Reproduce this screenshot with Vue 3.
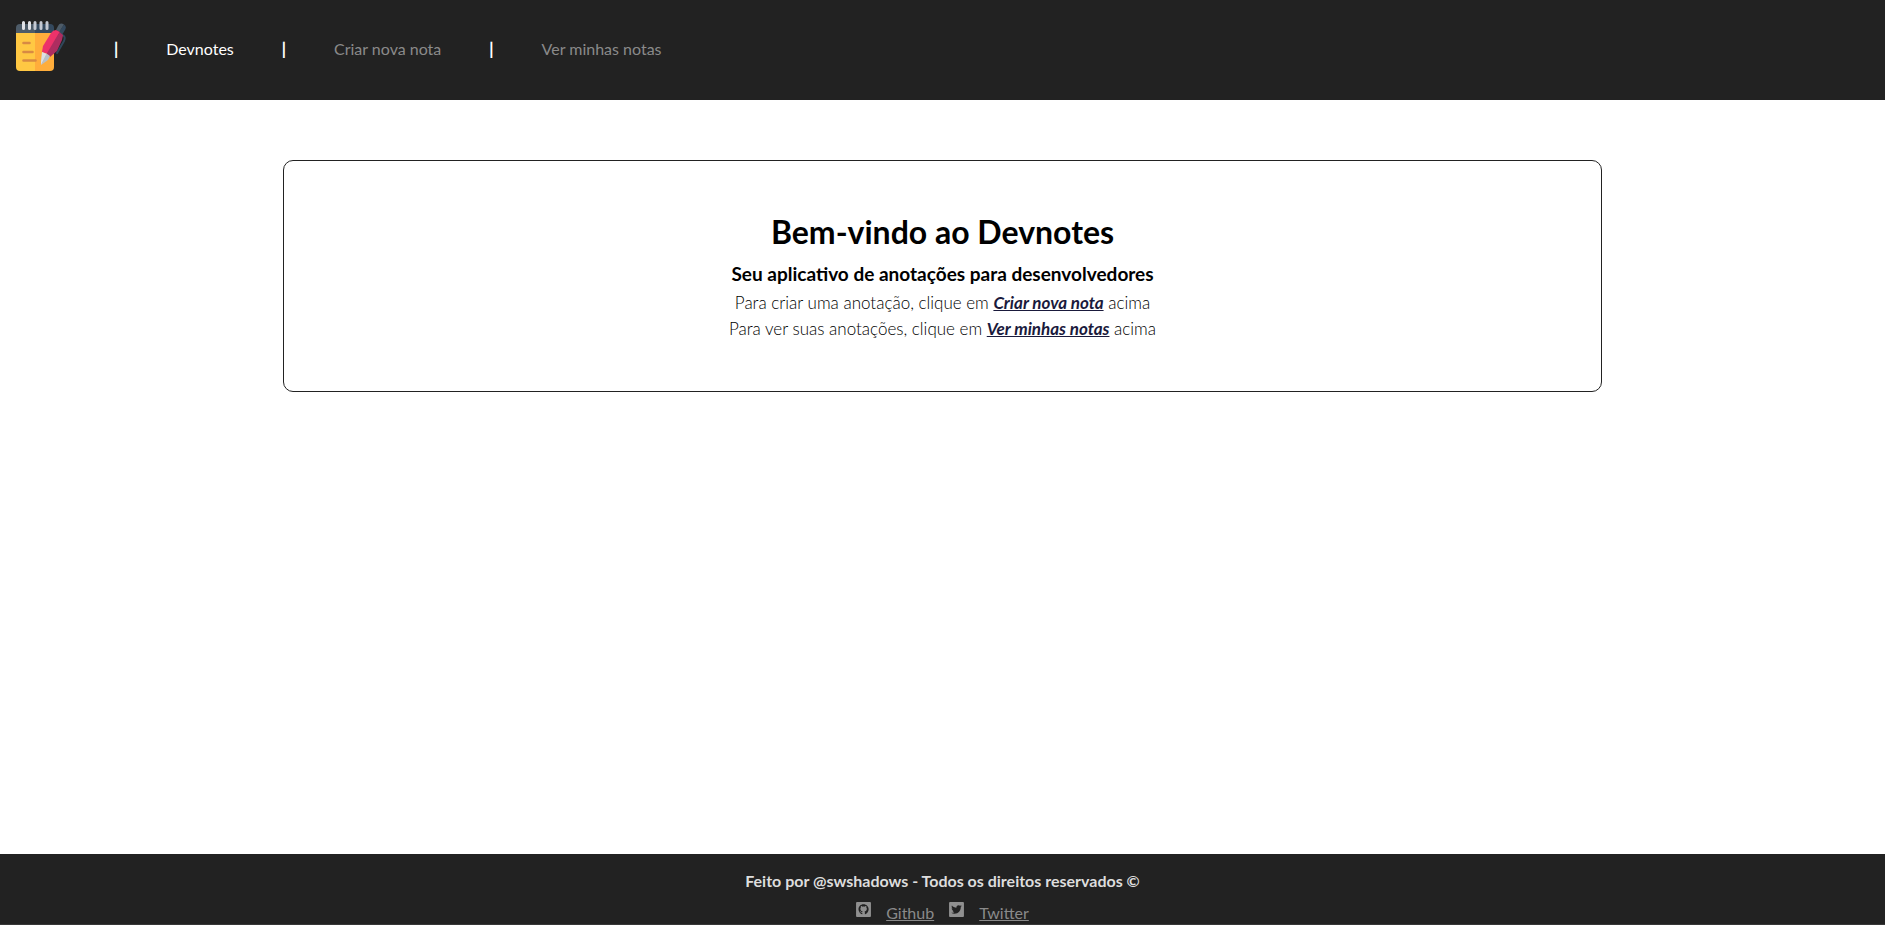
<script setup>
const links = [
  { label: 'Devnotes', active: true },
  { label: 'Criar nova nota', active: false },
  { label: 'Ver minhas notas', active: false },
]
const hints = [
  { before: 'Para criar uma anotação, clique em', target: 'Criar nova nota' },
  { before: 'Para ver suas anotações, clique em', target: 'Ver minhas notas' },
]
</script>

<template>
  <div class="page">
    <header class="topbar">
      <svg class="logo" viewBox="0 0 50 50" role="img" aria-label="Devnotes">
        <path fill="#ffc843" d="M0 11h19v39H4a4 4 0 0 1-4-4z" />
        <path fill="#ffad3b" d="M19 11h19v35a4 4 0 0 1-4 4H19z" />
        <path fill="#4d5b68" d="M4 3h15v9H0V7a4 4 0 0 1 4-4z" />
        <path fill="#34495e" d="M19 3h15a4 4 0 0 1 4 4v5H19z" />
        <path fill="none" stroke="#e2e3e7" stroke-width="3" stroke-linecap="round" d="M7.500 1.500v6M13.500 1.500v6" />
        <path fill="none" stroke="#c3c8d1" stroke-width="3" stroke-linecap="round" d="M19 1.500v6M25 1.500v6M31 1.500v6" />
        <path fill="none" stroke="#d88a43" stroke-width="2.600" stroke-linecap="round" d="M7.500 22h6M7.500 31h9M7.500 39.500h12" />
        <path fill="none" stroke="#30475b" stroke-width="2" stroke-linecap="round" stroke-linejoin="round" d="M46 14q4 1 2 6l-7 12" />
        <path fill="#4d5b68" d="M40 9l2-4q2-4 6-1.500L43.500 11z" />
        <path fill="#34495e" d="M48 3.500q3 2 1 5.500l-3 5-3-3z" />
        <path fill="#ec326a" d="M40 9l4 2-12 22-6-2 1-6L35 12q2-3 5-3z" />
        <path fill="#ad2d60" d="M43.500 11l3.500 3-1 5-5 11-7 6-3.500-3z" />
        <path fill="#dce0e5" d="M26 31l5 2-6 11 0-4z" />
        <path fill="#b8c0c9" d="M30.500 32.500l3.500 2.500-2 4-7 5z" />
      </svg>
      <nav class="nav">
        <template v-for="link in links" :key="link.label">
          <span class="separator" aria-hidden="true">|</span>
          <a href="#" class="nav-link" :class="{ active: link.active }">{{ link.label }}</a>
        </template>
      </nav>
    </header>

    <main class="content">
      <section class="card">
        <h1>Bem-vindo ao Devnotes</h1>
        <h2>Seu aplicativo de anotações para desenvolvedores</h2>
        <p v-for="hint in hints" :key="hint.target" class="hint">
          {{ hint.before }} <a href="#" class="hint-link">{{ hint.target }}</a> acima
        </p>
      </section>
    </main>

    <footer class="footer">
      <p class="credit">Feito por @swshadows - Todos os direitos reservados ©</p>
      <div class="social">
        <svg class="icon" viewBox="0 0 448 512" aria-hidden="true">
          <rect y="32" width="448" height="448" rx="28" fill="#909090" />
          <path fill="#222" d="M224 101C138 101 73 166 73 251c0 68 43 126 104 146 8 1 11-3 11-7v-34c-43 9-52-19-52-19-7-18-17-23-17-23-14-10 1-10 1-10 15 1 23 16 23 16 14 23 37 17 46 13 1-10 6-17 10-21-34-4-69-17-69-77 0-17 5-29 16-40-2-4-7-20 1-41 13-4 42 16 42 16 24-7 51-7 75 0 0 0 29-20 42-16 8 21 3 37 1 41 11 11 17 23 17 40 0 60-36 73-70 77 6 5 11 14 11 28v50c0 4 3 8 11 7 60-20 103-78 103-146 0-85-69-150-155-150z" />
        </svg>
        <a href="#" class="social-link">Github</a>
        <svg class="icon" viewBox="0 0 448 512" aria-hidden="true">
          <rect y="32" width="448" height="448" rx="28" fill="#909090" />
          <path fill="#222" d="M351.100 190.800c.2 2.800.2 5.700.2 8.500 0 86.700-66 186.600-186.600 186.600-37.200 0-71.700-10.800-100.700-29.400 5.300.6 10.400.8 15.800.8 30.700 0 58.900-10.400 81.400-28-28.800-.6-53-19.500-61.300-45.500 10.100 1.500 19.200 1.500 29.600-1.200-30-6.100-52.500-32.500-52.500-64.400v-.8c8.700 4.900 18.900 7.900 29.600 8.300a65.447 65.447 0 0 1-29.200-54.600c0-12.200 3.200-23.400 8.900-33.100 32.300 39.800 80.800 65.800 135.200 68.600-9.300-44.500 24-80.600 64-80.600 18.900 0 35.900 7.900 47.900 20.700 14.800-2.800 29-8.300 41.600-15.800-4.900 15.200-15.200 28-28.800 36.100 13.200-1.400 26-5.100 37.800-10.200-8.900 13.100-20.100 24.700-32.900 34z" />
        </svg>
        <a href="#" class="social-link">Twitter</a>
      </div>
    </footer>
  </div>
</template>

<style>
body {
  margin: 0;
  background: #fff;
}
</style>

<style scoped>
.page {
  display: flex;
  flex-direction: column;
  min-height: 100vh;
  font-family: Lato, "Noto Sans", sans-serif;
  font-size: 16px;
  line-height: 26px;
  color: #000;
}

.topbar {
  display: flex;
  align-items: flex-start;
  gap: 48px;
  padding: 21px 16px 29px;
  background: #222;
}

.logo {
  width: 50px;
  height: 50px;
}

.nav {
  display: flex;
  align-items: center;
  gap: 48px;
  padding-top: 15px;
}

.separator {
  color: #fff;
  font-size: 16px;
  font-weight: 900;
}

.nav-link {
  color: #8a8a8a;
  text-decoration: none;
}

.nav-link.active {
  color: #fff;
}

.content {
  flex: 1;
}

.card {
  box-sizing: border-box;
  width: 70%;
  margin: 60px auto;
  padding: 45px 16px 49px;
  border: 1px solid #222;
  border-radius: 10px;
  text-align: center;
}

h1,
h2,
p {
  margin: 0;
}

h1 {
  font-size: 32px;
  line-height: 52px;
}

h2 {
  font-size: 19px;
  line-height: 32px;
}

.hint {
  color: #000;
  font-size: 17px;
  font-weight: 300;
}

.hint-link {
  color: #1a1a3c;
  font-weight: 700;
  font-style: italic;
}

.footer {
  padding-top: 15px;
  border-bottom: 1px solid #383838;
  background: #222;
  text-align: center;
}

.credit {
  line-height: 24px;
  color: #ddd;
  font-weight: 700;
}

.social {
  display: flex;
  justify-content: center;
  gap: 15px;
  padding-top: 8px;
  line-height: 23px;
}

.icon {
  width: 15px;
  height: 17px;
}

.social-link {
  color: #8a8a8a;
}
</style>
